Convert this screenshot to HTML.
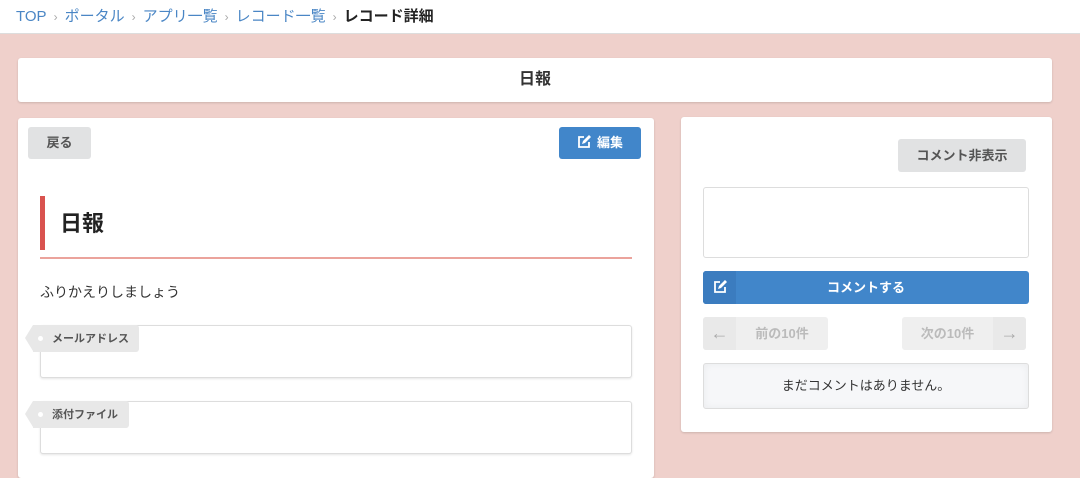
<!DOCTYPE html>
<html><head><meta charset="utf-8"><style>
*{box-sizing:border-box;margin:0;padding:0}
body{width:1080px;height:462px;overflow:hidden;background:#efd0cb;font-family:"Liberation Sans","Noto Sans CJK JP",sans-serif;color:#333;position:relative}
.a{position:absolute}
.bc{left:0;top:0;width:1080px;height:34px;background:#fff;border-bottom:1px solid #ddd;font-size:15px;line-height:33px;padding-left:16px;color:#4a86c5}
.bc .s{color:#aaa;margin:0 7px;font-size:12px}
.bc b{color:#222}
.card{background:#fff;border-radius:3px;box-shadow:0 1px 2px rgba(0,0,0,.15)}
.btn{border-radius:3px;font-size:13px;font-weight:bold;text-align:center}
.g{background:#e1e2e3;color:#555}
.bl{background:#4186ca;color:#fff}
.field{border:1px solid #ddd;border-radius:3px;box-shadow:0 1px 2px rgba(0,0,0,.1);background:#fff}
.lab{background:#e8e8e8;font-size:11px;font-weight:bold;color:#555;line-height:29px;padding-left:19px;border-radius:0 3px 3px 0}
.lab:before{content:"";position:absolute;left:-8px;top:0;border-right:8px solid #e8e8e8;border-top:13.5px solid transparent;border-bottom:13.5px solid transparent}
.lab:after{content:"";position:absolute;left:5px;top:11px;width:5px;height:5px;border-radius:50%;background:#fff}
.pg{background:#efefef;color:#bbb;font-size:13px;font-weight:bold;line-height:33px;border-radius:3px}
.ar{font-size:18px;color:#aaa;font-weight:bold}
</style></head><body>
<div class="a bc">TOP<span class="s">›</span>ポータル<span class="s">›</span>アプリ一覧<span class="s">›</span>レコード一覧<span class="s">›</span><b>レコード詳細</b></div>
<div class="a card" style="left:18px;top:58px;width:1034px;height:44px;text-align:center;line-height:44px;font-weight:bold;font-size:16px">日報</div>
<div class="a card" style="left:18px;top:118px;width:636px;height:360px"></div>
<div class="a btn g" style="left:28px;top:127px;width:63px;height:32px;line-height:32px">戻る</div>
<div class="a btn bl" style="left:559px;top:127px;width:82px;height:32px;line-height:32px"><svg width="14" height="14" viewBox="0 0 14 14" style="vertical-align:-2px;margin-right:6px"><path d="M7 2H2v10h10V7" fill="none" stroke="#fff" stroke-width="1.8"/><path d="M5 9l1-3 6-6 2 2-6 6z" fill="#fff"/></svg>編集</div>
<div class="a" style="left:40px;top:196px;width:5px;height:54px;background:#d9534f"></div>
<div class="a" style="left:60px;top:208px;font-size:22px;line-height:32px;color:#222;font-weight:bold">日報</div>
<div class="a" style="left:40px;top:257px;width:592px;height:2px;background:#eba39c"></div>
<div class="a" style="left:40px;top:282px;font-size:14px;line-height:20px">ふりかえりしましょう</div>
<div class="a field" style="left:40px;top:325px;width:592px;height:53px"></div>
<div class="a lab" style="left:33px;top:325px;width:106px;height:27px">メールアドレス</div>
<div class="a field" style="left:40px;top:401px;width:592px;height:53px"></div>
<div class="a lab" style="left:33px;top:401px;width:96px;height:27px">添付ファイル</div>
<div class="a card" style="left:681px;top:117px;width:371px;height:315px"></div>
<div class="a btn g" style="left:898px;top:139px;width:128px;height:33px;line-height:33px">コメント非表示</div>
<div class="a" style="left:703px;top:187px;width:326px;height:71px;border:1px solid #ddd;border-radius:3px"></div>
<div class="a btn bl" style="left:703px;top:271px;width:326px;height:33px;line-height:33px;padding-left:0"><span class="a" style="left:0;top:0;width:33px;height:33px;background:#3b7cbf;border-radius:3px 0 0 3px"><svg width="14" height="14" viewBox="0 0 14 14" style="margin-top:9px"><path d="M7 2H2v10h10V7" fill="none" stroke="#fff" stroke-width="1.8"/><path d="M5 9l1-3 6-6 2 2-6 6z" fill="#fff"/></svg></span>コメントする</div>
<div class="a pg" style="left:703px;top:317px;width:125px;height:33px"><span class="a ar" style="left:0;width:33px;text-align:center;background:#e9e9e9;border-radius:3px 0 0 3px">←</span><span class="a" style="left:33px;width:92px;text-align:center">前の10件</span></div>
<div class="a pg" style="left:902px;top:317px;width:124px;height:33px"><span class="a" style="left:0;width:91px;text-align:center">次の10件</span><span class="a ar" style="left:91px;width:33px;text-align:center;background:#e9e9e9;border-radius:0 3px 3px 0">→</span></div>
<div class="a" style="left:703px;top:363px;width:326px;height:46px;border:1px solid #ddd;border-radius:3px;background:#f6f7f9;box-shadow:inset 0 0 8px rgba(0,0,0,.05);text-align:center;line-height:44px;font-size:13px">まだコメントはありません。</div>
</body></html>
